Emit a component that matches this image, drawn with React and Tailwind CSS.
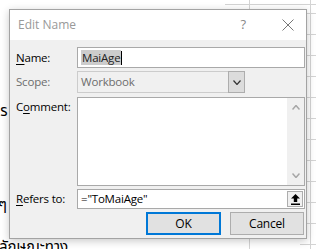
import React from "react";

const font = { fontFamily: '"Open Sans", "Noto Sans", "Noto Sans Thai", sans-serif' };

function Chevron({ dir = "down", color = "#333", w = 8, h = 5, sw = 1.2 }) {
  const d = dir === "down" ? `M0.5 0.5 L${w / 2} ${h - 0.5} L${w - 0.5} 0.5` : `M0.5 ${h - 0.5} L${w / 2} 0.5 L${w - 0.5} ${h - 0.5}`;
  return (
    <svg width={w} height={h} viewBox={`0 0 ${w} ${h}`}>
      <path d={d} fill="none" stroke={color} strokeWidth={sw} />
    </svg>
  );
}

export default function App() {
  const rows = [13, 34, 55, 76, 97, 118, 139, 160, 181, 202, 223, 244];
  return (
    <div className="relative w-[316px] h-[249px] overflow-hidden bg-white" style={font}>
      {/* spreadsheet behind */}
      <div className="absolute left-[225px] top-[4px] w-[100px] h-px bg-[#d4d4d4]" />
      <div className="absolute left-[249px] top-0 w-px h-[249px] bg-[#d4d4d4]" />
      <div className="absolute left-[310px] top-0 w-px h-[249px] bg-[#d4d4d4]" />
      {rows.map((y) => (
        <div key={y} className="absolute left-[300px] w-[20px] h-px bg-[#d4d4d4]" style={{ top: y }} />
      ))}
      <div className="absolute left-[-9px] top-[103px] text-[15px] leading-none text-black">ดร</div>
      <div className="absolute left-[-2px] top-[197px] text-[15px] leading-none text-black">ๆ</div>
      <div className="absolute left-[-1px] top-[239px] text-[15px] leading-none text-black whitespace-nowrap">ลักษณะทาง</div>

      {/* dialog window */}
      <div className="absolute left-[9px] top-[9px] w-[298px] h-[230px] border border-[#a3a3a3] bg-[#f0f0f0] flex flex-col shadow-[0_2px_8px_rgba(0,0,0,0.22)]">
        <div className="h-[30px] bg-white flex items-center pl-[8px] pr-[12px] text-[12px] text-[#999]">
          <span className="flex-1">Edit Name</span>
          <span className="mr-[36px] text-[13px] text-[#888]">?</span>
          <svg width="12" height="12" viewBox="0 0 12 12">
            <path d="M0.5 0.5 L11.5 11.5 M11.5 0.5 L0.5 11.5" stroke="#777" strokeWidth="1" />
          </svg>
        </div>
        <div className="flex-1 flex flex-col pl-[6px] pr-[1px] pt-[7px] text-[11.5px] tracking-[-0.2px] text-black">
          {/* Name */}
          <div className="flex items-center h-[21px]">
            <div className="w-[61px]"><span className="underline underline-offset-2">N</span>ame:</div>
            <div className="flex-1 h-full border border-[#a9a9a9] bg-white flex items-center pl-[3px]">
              <span className="bg-[#cccccc] text-[#222] px-[1px] leading-[15px]">MaiAge</span>
              <span className="w-px h-[14px] bg-black" />
            </div>
          </div>
          {/* Scope */}
          <div className="flex items-center h-[22px] mt-[3px]">
            <div className="w-[61px] text-[#6d6d6d]">Scope:</div>
            <div className="w-[151px] h-full border border-[#cccccc] bg-[#f0f0f0] flex items-center pl-[3px] text-[#6d6d6d] border-r-0">
              Workbook
            </div>
            <div className="w-[17px] h-full border border-[#adadad] bg-[#dcdcdc] flex items-center justify-center">
              <Chevron />
            </div>
          </div>
          {/* Comment */}
          <div className="flex h-[89px] mt-[4px]">
            <div className="w-[61px] pt-[1px]">C<span className="underline underline-offset-2">o</span>mment:</div>
            <div className="flex-1 h-full border border-[#a9a9a9] bg-white flex justify-end">
              <div className="w-[17px] h-full bg-[#f0f0f0] flex flex-col items-center justify-between py-[7px]">
                <Chevron dir="up" color="#a6a6a6" sw={1.5} />
                <Chevron dir="down" color="#a6a6a6" sw={1.5} />
              </div>
            </div>
          </div>
          {/* Refers to */}
          <div className="flex items-center h-[20px] mt-[3px]">
            <div className="w-[61px]"><span className="underline underline-offset-2">R</span>efers to:</div>
            <div className="flex-1 h-full border border-[#a9a9a9] bg-white flex items-center pl-[3px] pr-[1px]">
              <span className="flex-1">="ToMaiAge"</span>
              <div className="w-[16px] h-[16px] border border-[#adadad] bg-[#f0f0f0] flex items-center justify-center">
                <svg width="9" height="11" viewBox="0 0 9 11">
                  <path d="M4.5 0 L9 4.5 H6.2 V8 H2.8 V4.5 H0 Z" fill="#000" />
                  <rect x="0" y="9.5" width="9" height="1.5" fill="#000" />
                </svg>
              </div>
            </div>
          </div>
          {/* Buttons */}
          <div className="flex justify-end gap-[9px] mt-[3px] pr-[1px]">
            <button className="w-[75px] h-[23px] border-2 border-[#0078d7] bg-[#e1e1e1] text-[12px] text-black">OK</button>
            <button className="w-[74px] h-[23px] border border-[#adadad] bg-[#e1e1e1] text-[12px] text-black">Cancel</button>
          </div>
        </div>
      </div>
    </div>
  );
}
